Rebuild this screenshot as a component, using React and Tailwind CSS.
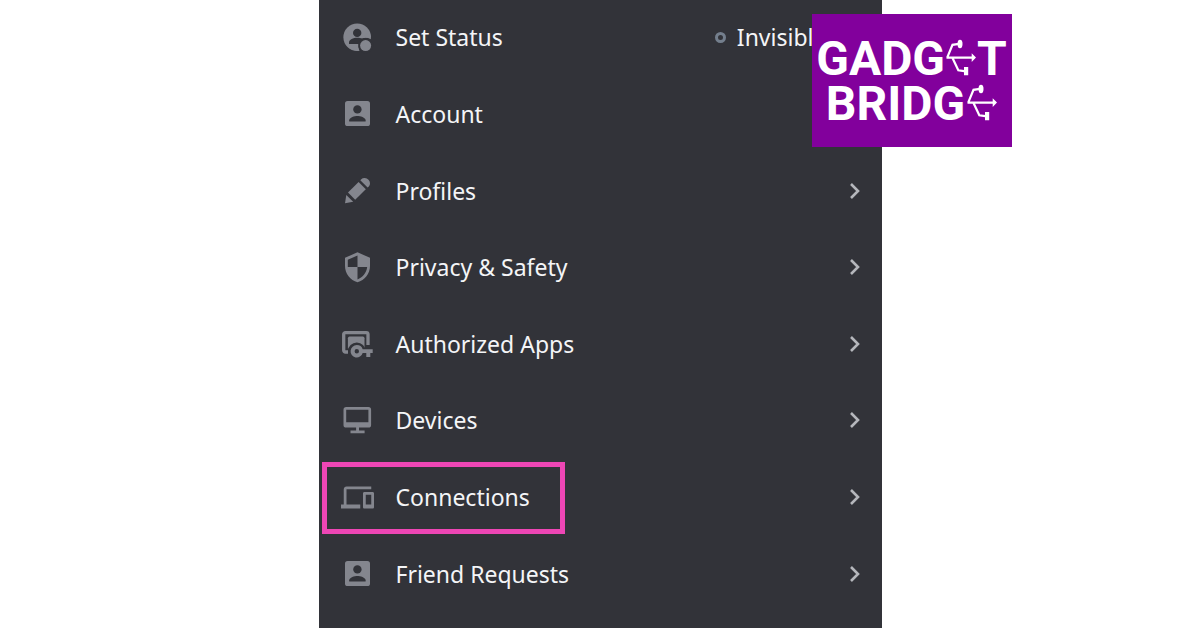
import React from "react";

const Icon = ({ children }) => (
  <svg viewBox="0 -1 33 33" className="h-[33px] w-[33px] shrink-0 text-[#84868e]" fill="currentColor" aria-hidden="true">
    {children}
  </svg>
);

const StatusIcon = () => (
  <Icon>
    <circle cx="16.2" cy="15.2" r="13.8" />
    <g fill="#323339">
      <circle cx="16.2" cy="10.9" r="4.2" />
      <path d="M8 22v-1.5c0-2.900 4.400-4.800 8.200-4.800 2 0 3.600.4 5 .9L31 15v15H19l-2.500-7.700z" />
      <circle cx="24.5" cy="23.600" r="7.800" />
    </g>
    <path d="M21 16.500Q25 14.200 29.800 17.200L30 14.200L26 11.700z" />
    <circle cx="24.6" cy="23.600" r="5.500" />
    <path d="M8 22h9.200q-.5 3.200 1 6.700l-2 .3L9 26.700z" />
  </Icon>
);

const AccountIcon = () => (
  <Icon>
    <rect x="4" y="3" width="25" height="25" rx="2.600" />
    <g fill="#323339">
      <circle cx="16.400" cy="11.400" r="4.200" />
      <path d="M8.200 23.600v-1.400c0-2.800 5.500-4.300 8.200-4.300s8.200 1.500 8.200 4.300v1.400z" />
    </g>
  </Icon>
);

const PencilIcon = () => (
  <Icon>
    <path d="M5.300 19.900l6.900 6.900L4 28.200z" />
    <path d="M7 17.600L17.600 7l7.200 7.200L14.200 24.800z" />
    <path d="M19.300 5.300l1-1q1.300-1.300 3.500-1.200 2.200.2 3.700 1.700 1.400 1.500 1.500 3.400.1 1.900-1.200 3.200l-1.200 1.200z" />
  </Icon>
);

const ShieldIcon = () => (
  <Icon>
    <path
      fillRule="evenodd"
      d="M16.500.3L29 5.800v8.300c0 7.700-5.300 14.200-12.500 16.200C9.300 28.300 4 21.800 4 14.100V5.800zM16.500 3.400L6.800 7.700V15h9.700zM16.500 15v12.400c5.100-1.700 8.900-6.500 9.700-12.400z"
    />
  </Icon>
);

const AppsIcon = () => (
  <Icon>
    <path d="M7 24H4.400a1.700 1.700 0 0 1-1.700-1.700V6.300a1.700 1.700 0 0 1 1.700-1.700h20.900A1.700 1.700 0 0 1 27 6.300V17" fill="none" stroke="currentColor" strokeWidth="3.300" />
    <path d="M6.900 20.500V10.300q0-1.700 1.700-1.700h13.200q1.700 0 1.700 1.700v10.200z" />
    <circle cx="15.800" cy="23.300" r="8.800" fill="#323339" />
    <path
      fillRule="evenodd"
      d="M15.800 17.100a6.200 6.200 0 0 1 5.900 4.200h10v3.800h-2.400v4h-4v-4h-3.600a6.200 6.200 0 1 1-5.900-8zm0 4a2.200 2.200 0 1 0 0 4.400 2.200 2.200 0 0 0 0-4.400z"
    />
  </Icon>
);

const MonitorIcon = () => (
  <Icon>
    <path
      fillRule="evenodd"
      d="M5.200 2.100h22.200a2.700 2.700 0 0 1 2.700 2.700v15.100a2.700 2.700 0 0 1-2.700 2.700H18v2.900h5.600v2.700H9.500v-2.700h5.600v-2.900H5.200a2.700 2.700 0 0 1-2.700-2.700V4.800a2.700 2.700 0 0 1 2.700-2.700zM5.200 4.800v12.400h22.200V4.800z"
    />
  </Icon>
);

const LaptopIcon = () => (
  <Icon>
    <g transform="translate(0 -1) scale(1.375)">
      <path d="M4 6h18V4H4c-1.100 0-2 .9-2 2v11H0v3h14v-3H4V6zm19 2h-6c-.55 0-1 .45-1 1v10c0 .55.45 1 1 1h6c.55 0 1-.45 1-1V9c0-.55-.45-1-1-1zm-1 9h-4v-7h4v7z" />
    </g>
  </Icon>
);

const Chevron = () => (
  <svg viewBox="0 0 12 18" className="h-[18px] w-3" fill="none" stroke="#b5b7bc" strokeWidth="2.600" aria-hidden="true">
    <path d="M2 2l7 7-7 7" />
  </svg>
);

const Usb = () => (
  <svg viewBox="0 0 30 38" className="h-[38px] w-[30px] shrink-0" fill="none" stroke="white" strokeWidth="2.200" aria-hidden="true">
    <path d="M1.200 18.600L6.500 5.800 13 4.800M.5 18.600H27M6.500 19l5.800 12.300 6 .9" />
    <g fill="white" stroke="none">
      <ellipse cx="14" cy="5" rx="2.500" ry="4.200" />
      <path d="M25.700 14.200l4.300 4.400-4.300 4.400zM18 28h4.200v8.300H18z" />
    </g>
  </svg>
);

const items = [
  { label: "Set Status", icon: StatusIcon, status: "Invisible" },
  { label: "Account", icon: AccountIcon, plain: true },
  { label: "Profiles", icon: PencilIcon },
  { label: "Privacy & Safety", icon: ShieldIcon },
  { label: "Authorized Apps", icon: AppsIcon },
  { label: "Devices", icon: MonitorIcon },
  { label: "Connections", icon: LaptopIcon, highlighted: true },
  { label: "Friend Requests", icon: AccountIcon },
];

function Row({ item }) {
  const Glyph = item.icon;
  return (
    <li className="relative flex flex-1">
      <button type="button" className="flex w-full items-center pr-[21px] pb-[2px] pl-[22px] text-left">
        <Glyph />
        <span className="ml-[22px] flex-1">{item.label}</span>
        {item.status ? (
          <span className="mr-[34px] flex items-center gap-[11px]">
            <span className="h-[11px] w-[11px] rounded-full border-[3px] border-[#747f8d]" />
            {item.status}
          </span>
        ) : (
          !item.plain && <Chevron />
        )}
      </button>
      {item.highlighted && (
        <span className="pointer-events-none absolute top-[2px] left-[3px] h-[72px] w-[243px] border-[5px] border-[#ee46b5]" />
      )}
    </li>
  );
}

export default function App() {
  return (
    <div className="min-h-screen overflow-x-hidden bg-white">
      <main className="relative mx-auto flex min-h-screen w-full max-w-[563px] flex-col bg-[#323339] pb-[15px] font-['Noto_Sans',sans-serif] text-[23px] leading-8 text-[#f4f5f7]">
        <ul className="flex flex-1 flex-col">
          {items.map((item) => (
            <Row key={item.label} item={item} />
          ))}
        </ul>
        <div className="absolute top-[14px] -right-[130px] flex h-[133px] w-[200px] flex-col items-center justify-center bg-[#82009c] font-['Roboto',sans-serif] text-[48px] leading-[45px] font-bold text-white">
          <div className="flex items-center gap-px">
            <span>GADG</span>
            <Usb />
            <span>T</span>
          </div>
          <div className="flex items-center gap-[2px]">
            <span>BRIDG</span>
            <Usb />
          </div>
        </div>
      </main>
    </div>
  );
}
